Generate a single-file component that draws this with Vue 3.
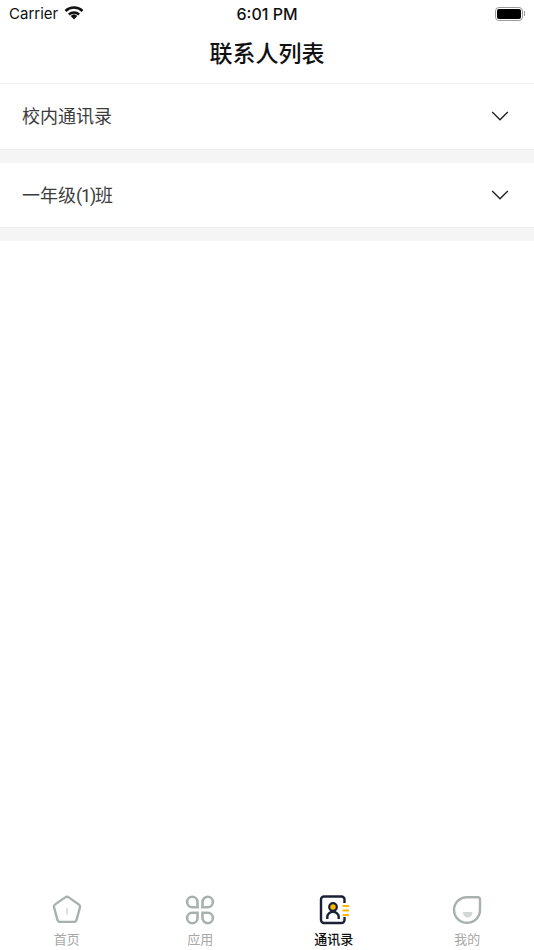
<script setup>
const sections = [
  { pre: '校内通讯录' },
  { pre: '一年级', num: '(1)', post: '班' }
]
const tabs = [
  { key: 'home', label: '首页' },
  { key: 'apps', label: '应用' },
  { key: 'contacts', label: '通讯录', active: true },
  { key: 'me', label: '我的' }
]
</script>

<template>
  <div class="page">
    <div class="status-bar">
      <div class="status-left">
        <span>Carrier</span>
        <svg class="wifi" width="20" height="15" viewBox="0 0 20 15">
          <path d="M10 14.400 6.700 10.900a4.800 4.800 0 0 1 6.600 0z" fill="#111" />
          <path d="M.6 5a13.600 13.600 0 0 1 18.800 0l-1.800 1.900a11 11 0 0 0-15.200 0z" fill="#111" />
          <path d="M4 8.600a8.700 8.700 0 0 1 12 0l-1.700 1.800a6.200 6.200 0 0 0-8.600 0z" fill="#111" />
        </svg>
      </div>
      <span class="time">6:01 PM</span>
      <div class="battery">
        <div class="battery-body"><div class="battery-fill"></div></div>
        <div class="battery-cap"></div>
      </div>
    </div>

    <header class="title-bar">联系人列表</header>

    <section v-for="item in sections" :key="item.pre" class="group">
      <div class="row">
        <span class="row-name">{{ item.pre }}<span v-if="item.num" class="num">{{ item.num }}</span>{{ item.post }}</span>
        <svg width="18" height="12" viewBox="0 0 18 12">
          <path d="M1.200 2 9 9.800 16.800 2" fill="none" stroke="#222" stroke-width="1.400" />
        </svg>
      </div>
      <div class="gap"></div>
    </section>

    <div class="spacer"></div>

    <nav class="tabs">
      <div v-for="tab in tabs" :key="tab.key" class="tab" :class="{ active: tab.active }">
        <svg v-if="tab.key === 'home'" width="30" height="30" viewBox="0 0 30 30">
          <path d="M13.200 2.400a3 3 0 0 1 3.600 0l10 7a3 3 0 0 1 1.100 3.300l-3.300 12a3 3 0 0 1-2.900 2.200H8.300a3 3 0 0 1-2.900-2.200l-3.300-12a3 3 0 0 1 1.100-3.300z" fill="none" stroke="#a9b1af" stroke-width="2.400" />
          <rect x="14.200" y="13" width="1.600" height="6.500" fill="#d3d7d6" />
        </svg>
        <svg v-else-if="tab.key === 'apps'" width="30" height="30" viewBox="0 0 30 30">
          <g fill="none" stroke="#a9b1af" stroke-width="2.600">
            <path d="M7.300 1.800a5.200 5.200 0 0 1 5.200 5.200v5.200H7.300a5.200 5.200 0 0 1 0-10.400z" />
            <path d="M22.700 1.800a5.200 5.200 0 0 0-5.200 5.200v5.200h5.200a5.200 5.200 0 0 0 0-10.400z" />
            <path d="M7.300 28.200a5.200 5.200 0 0 0 5.200-5.200v-5.200H7.300a5.200 5.200 0 0 0 0 10.400z" />
            <path d="M22.700 28.200a5.200 5.200 0 0 1-5.200-5.200v-5.200h5.200a5.200 5.200 0 0 1 0 10.400z" />
          </g>
        </svg>
        <svg v-else-if="tab.key === 'contacts'" width="30" height="30" viewBox="0 0 30 30">
          <path d="M25.500 8V4.500a3 3 0 0 0-3-3H5a3 3 0 0 0-3 3v20.500a3 3 0 0 0 3 3h17.500a3 3 0 0 0 3-3V22" fill="none" stroke="#1b2036" stroke-width="2.400" />
          <circle cx="14" cy="12" r="3.800" fill="#fdb900" stroke="#1b2036" stroke-width="2.200" />
          <path d="M8.300 24v-2a5.700 5.200 0 0 1 11.400 0v2" fill="none" stroke="#1b2036" stroke-width="2.400" />
          <path d="M23.500 11h6.500M23.500 15.500h6.500M23.500 20h6.500" stroke="#fdb900" stroke-width="2.200" />
        </svg>
        <svg v-else width="30" height="30" viewBox="0 0 30 30">
          <path d="M15 2.200h11a2 2 0 0 1 2 2V15a13 12.800 0 1 1-13-12.800z" fill="none" stroke="#a9b1af" stroke-width="2.400" />
          <path d="M11 17h9.500c0 3.200-2 5.500-4.800 5.500S11 20.200 11 17z" fill="#d3d7d6" />
        </svg>
        <span class="tab-label">{{ tab.label }}</span>
      </div>
    </nav>
  </div>
</template>

<style scoped>
.page {
  width: 534px;
  height: 950px;
  display: flex;
  flex-direction: column;
  background: #fff;
  font-family: "Noto Sans CJK SC", "Liberation Sans", sans-serif;
  overflow: hidden;
}
.status-bar {
  height: 27px;
  flex: none;
  display: flex;
  align-items: center;
  justify-content: space-between;
  padding: 0 9px;
  font-family: Inter, "Liberation Sans", sans-serif;
  font-size: 15px;
  color: #111;
  position: relative;
}
.status-left { display: flex; align-items: center; gap: 6px; }
.wifi { margin-top: -3px; }
.time {
  position: absolute;
  left: 0;
  right: 0;
  text-align: center;
  font-size: 16px;
  font-weight: 500;
  pointer-events: none;
}
.battery { display: flex; align-items: center; gap: 1px; }
.battery-body {
  width: 28px;
  height: 14px;
  box-sizing: border-box;
  border: 1px solid #9a9a9a;
  border-radius: 4px;
  padding: 1px;
}
.battery-fill { width: 100%; height: 100%; background: #000; border-radius: 2px; }
.battery-cap { width: 1px; height: 5px; background: #9a9a9a; }
.title-bar {
  height: 57px;
  flex: none;
  box-sizing: border-box;
  display: flex;
  align-items: center;
  justify-content: center;
  padding-bottom: 7px;
  font-size: 23px;
  font-weight: 500;
  color: #111;
  border-bottom: 1px solid #f0f0f0;
}
.row {
  height: 64.5px;
  display: flex;
  align-items: center;
  justify-content: space-between;
  padding: 0 25px 0 22px;
  box-sizing: border-box;
}
.row-name {
  margin-top: -2px;
  font-family: Roboto, "Noto Sans CJK SC", sans-serif;
  font-size: 18px;
  color: #3c3c3c;
}
.num { letter-spacing: -1.2px; }
.gap {
  height: 14px;
  box-sizing: border-box;
  background: #f5f5f5;
  border-top: 1px solid #efefef;
}
.spacer { flex: 1; }
.tabs { height: 60px; flex: none; display: flex; padding-top: 5px; box-sizing: border-box; }
.tab {
  flex: 1;
  display: flex;
  flex-direction: column;
  align-items: center;
  gap: 6px;
}
.tab-label { font-size: 13px; line-height: 16px; color: #a8a8a8; }
.tab.active .tab-label { color: #111; font-weight: 500; }
</style>
